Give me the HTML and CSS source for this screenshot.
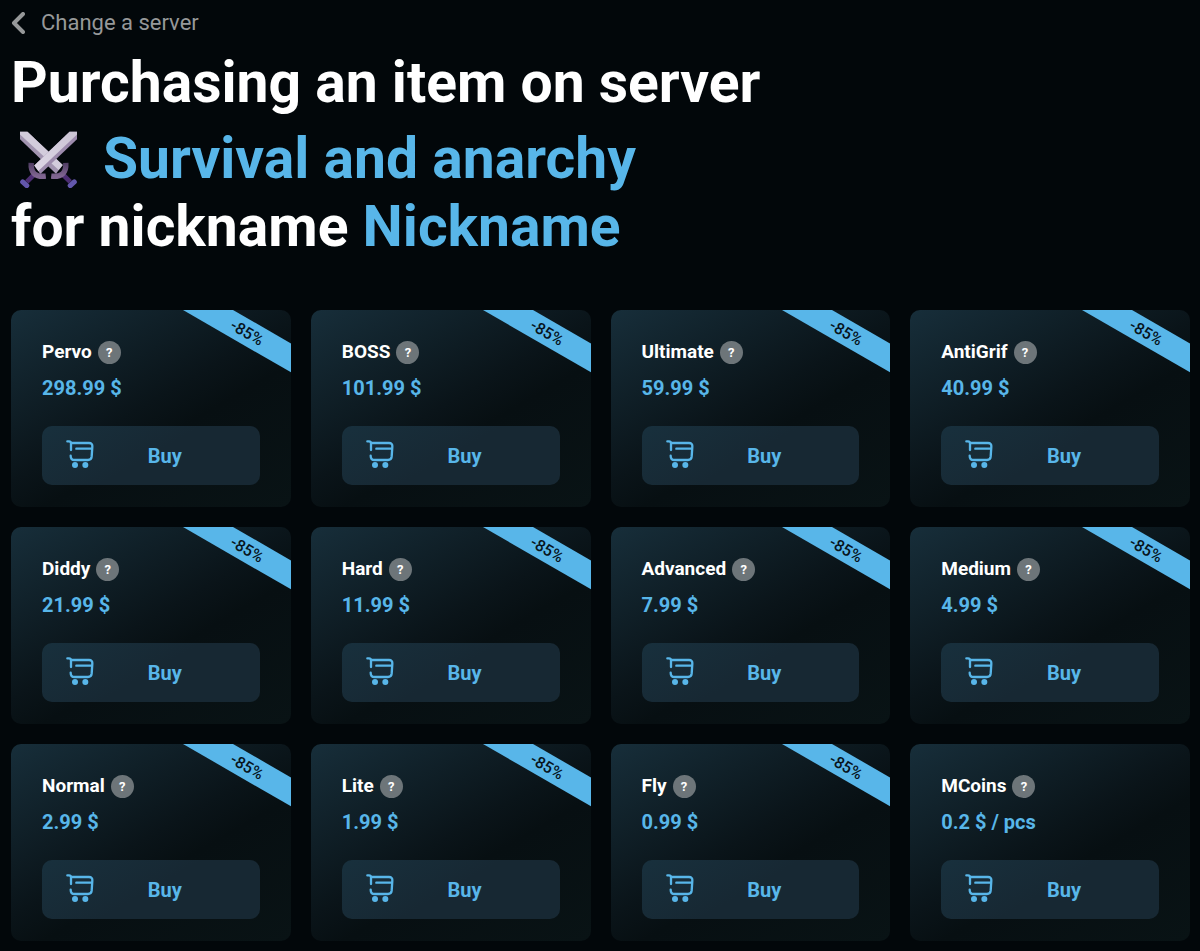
FILE: index.html
```
<!DOCTYPE html>
<html lang="en">
<head>
  <meta charset="UTF-8">
  <meta name="viewport" content="width=device-width, initial-scale=1">
  <title>Purchasing an item</title>
  <link rel="stylesheet" href="styles.css">
</head>
<body>
  <svg class="sprite" aria-hidden="true">
    <symbol id="cart" viewBox="0 0 84 84">
      <g fill="none" stroke="currentColor" stroke-width="7" stroke-linecap="round" stroke-linejoin="round">
        <path d="M4 4h5q6 0 6 6v20M15 9h54q11 0 10 11l-2 30q-1 10-11 10H26q-12 0-12-13M31 26h47" />
      </g>
      <circle cx="27" cy="75" r="9" fill="currentColor" />
      <circle cx="58" cy="75" r="9" fill="currentColor" />
    </symbol>
  </svg>

  <div class="container">
    <a class="back" href="#">
      <svg class="back-icon" viewBox="0 0 14 22" aria-hidden="true">
        <path d="M12 2L3 11l9 9" fill="none" stroke="currentColor" stroke-width="4" stroke-linecap="round" stroke-linejoin="round" />
      </svg>
      Change a server
    </a>

    <h1>
      Purchasing an item on server
      <span class="server">
        <svg class="swords" viewBox="0 0 168 168" aria-hidden="true">
          <defs>
            <linearGradient id="blade" x1="0" y1="1" x2="1" y2="0">
              <stop offset="0" stop-color="#ded7e6" />
              <stop offset="1" stop-color="#cbc4d4" />
            </linearGradient>
            <linearGradient id="guard" x1="0" y1="0" x2="0" y2="1">
              <stop offset="0" stop-color="#4f3c63" />
              <stop offset="1" stop-color="#806691" />
            </linearGradient>
          </defs>
          <!-- handles -->
          <path d="M44 126L20 150M124 126l24 24" stroke="#4c2d72" stroke-width="14" />
          <path d="M8 150l12 11M160 150l-12 11" stroke="#6357ac" stroke-width="15" stroke-linecap="round" />
          <!-- back sword -->
          <path d="M0 2h22l104 98-20 26L0 24z" fill="#a294b0" />
          <path d="M0 2h22l104 98-12 15L0 10z" fill="#d3ccdc" />
          <path d="M92 133q46 5 43-39" fill="none" stroke="url(#guard)" stroke-width="16" />
          <!-- front sword -->
          <path d="M168 2h-22L42 102l18 25L168 24z" fill="#9d8bad" />
          <path d="M168 2h-22L42 102l12 16L168 10z" fill="url(#blade)" />
          <path d="M33 94q-3 44 43 39" fill="none" stroke="url(#guard)" stroke-width="16" />
        </svg>
        Survival and anarchy
      </span>
      for nickname <span class="nickname">Nickname</span>
    </h1>

    <div class="products"></div>
  </div>

  <script>
    const products = [
      { name: 'Pervo', price: '298.99 $', discount: '-85%' },
      { name: 'BOSS', price: '101.99 $', discount: '-85%' },
      { name: 'Ultimate', price: '59.99 $', discount: '-85%' },
      { name: 'AntiGrif', price: '40.99 $', discount: '-85%' },
      { name: 'Diddy', price: '21.99 $', discount: '-85%' },
      { name: 'Hard', price: '11.99 $', discount: '-85%' },
      { name: 'Advanced', price: '7.99 $', discount: '-85%' },
      { name: 'Medium', price: '4.99 $', discount: '-85%' },
      { name: 'Normal', price: '2.99 $', discount: '-85%' },
      { name: 'Lite', price: '1.99 $', discount: '-85%' },
      { name: 'Fly', price: '0.99 $', discount: '-85%' },
      { name: 'MCoins', price: '0.2 $ / pcs' }
    ];

    const list = document.querySelector('.products');

    list.innerHTML = products.map((item) => `
      <div class="card">
        ${item.discount ? `<div class="discount">${item.discount}</div>` : ''}
        <div class="card-title">
          <h2>${item.name}</h2>
          <button class="info" aria-label="About ${item.name}">?</button>
        </div>
        <p class="price">${item.price}</p>
        <button class="buy">
          <svg class="cart" aria-hidden="true"><use href="#cart" /></svg>
          <span>Buy</span>
        </button>
      </div>
    `).join('');
  </script>
</body>
</html>
```
FILE: styles.css
```
* {
  box-sizing: border-box;
  margin: 0;
  padding: 0;
}

body {
  background: #02070a;
  color: white;
  font-family: Roboto, sans-serif;
  min-height: 100vh;
}

button {
  font-family: inherit;
  border: none;
  cursor: pointer;
}

.sprite {
  position: absolute;
  width: 0;
  height: 0;
}

.container {
  padding: 9px 10px 10px 11px;
}

.back {
  display: flex;
  align-items: center;
  gap: 16px;
  width: fit-content;
  color: #969899;
  font-size: 22px;
  line-height: 28px;
  text-decoration: none;
}

.back-icon {
  width: 14px;
  height: 22px;
}

h1 {
  margin-top: 12px;
  font-size: 57px;
  line-height: 68px;
  font-weight: 700;
}

.server {
  display: flex;
  align-items: center;
  gap: 26px;
  padding: 8px 0 0 9px;
  color: #58b6e9;
}

.swords {
  flex: none;
  width: 57px;
  height: 57px;
}

.nickname {
  color: #58b6e9;
}

.products {
  display: grid;
  grid-template-columns: repeat(4, 1fr);
  gap: 20px;
  margin-top: 49px;
}

.card {
  position: relative;
  overflow: hidden;
  padding: 30px 31px 22px;
  border-radius: 10px;
  background: linear-gradient(150deg, #172e3a 0%, #0a1419 48%, #070f12 60%, #091315 100%);
}

.discount {
  position: absolute;
  top: 10px;
  right: -46px;
  width: 180px;
  background: #58b6e9;
  color: #07141d;
  font-size: 16px;
  line-height: 25px;
  font-weight: 500;
  text-align: center;
  transform: rotate(30deg);
}

.card-title {
  display: flex;
  align-items: center;
  gap: 6px;
}

h2 {
  font-size: 19px;
  line-height: 24px;
  font-weight: 700;
}

.info {
  width: 23px;
  height: 23px;
  border-radius: 50%;
  background: #6d7579;
  color: white;
  font-size: 13px;
  line-height: 23px;
  font-weight: 700;
}

.price {
  margin-top: 12px;
  color: #58b6e9;
  font-size: 20px;
  line-height: 24px;
  font-weight: 700;
}

.buy {
  display: flex;
  align-items: center;
  width: 100%;
  height: 59px;
  margin-top: 26px;
  padding: 0 24px;
  border-radius: 10px;
  background: linear-gradient(150deg, #18303d, #172833 50%);
  color: #58b6e9;
  font-size: 20px;
  font-weight: 700;
}

.buy span {
  flex: 1;
  text-align: center;
}

.cart {
  width: 28px;
  height: 28px;
  margin-bottom: 4px;
}

@media (max-width: 1000px) {
  .products {
    grid-template-columns: repeat(2, 1fr);
  }
}
```
